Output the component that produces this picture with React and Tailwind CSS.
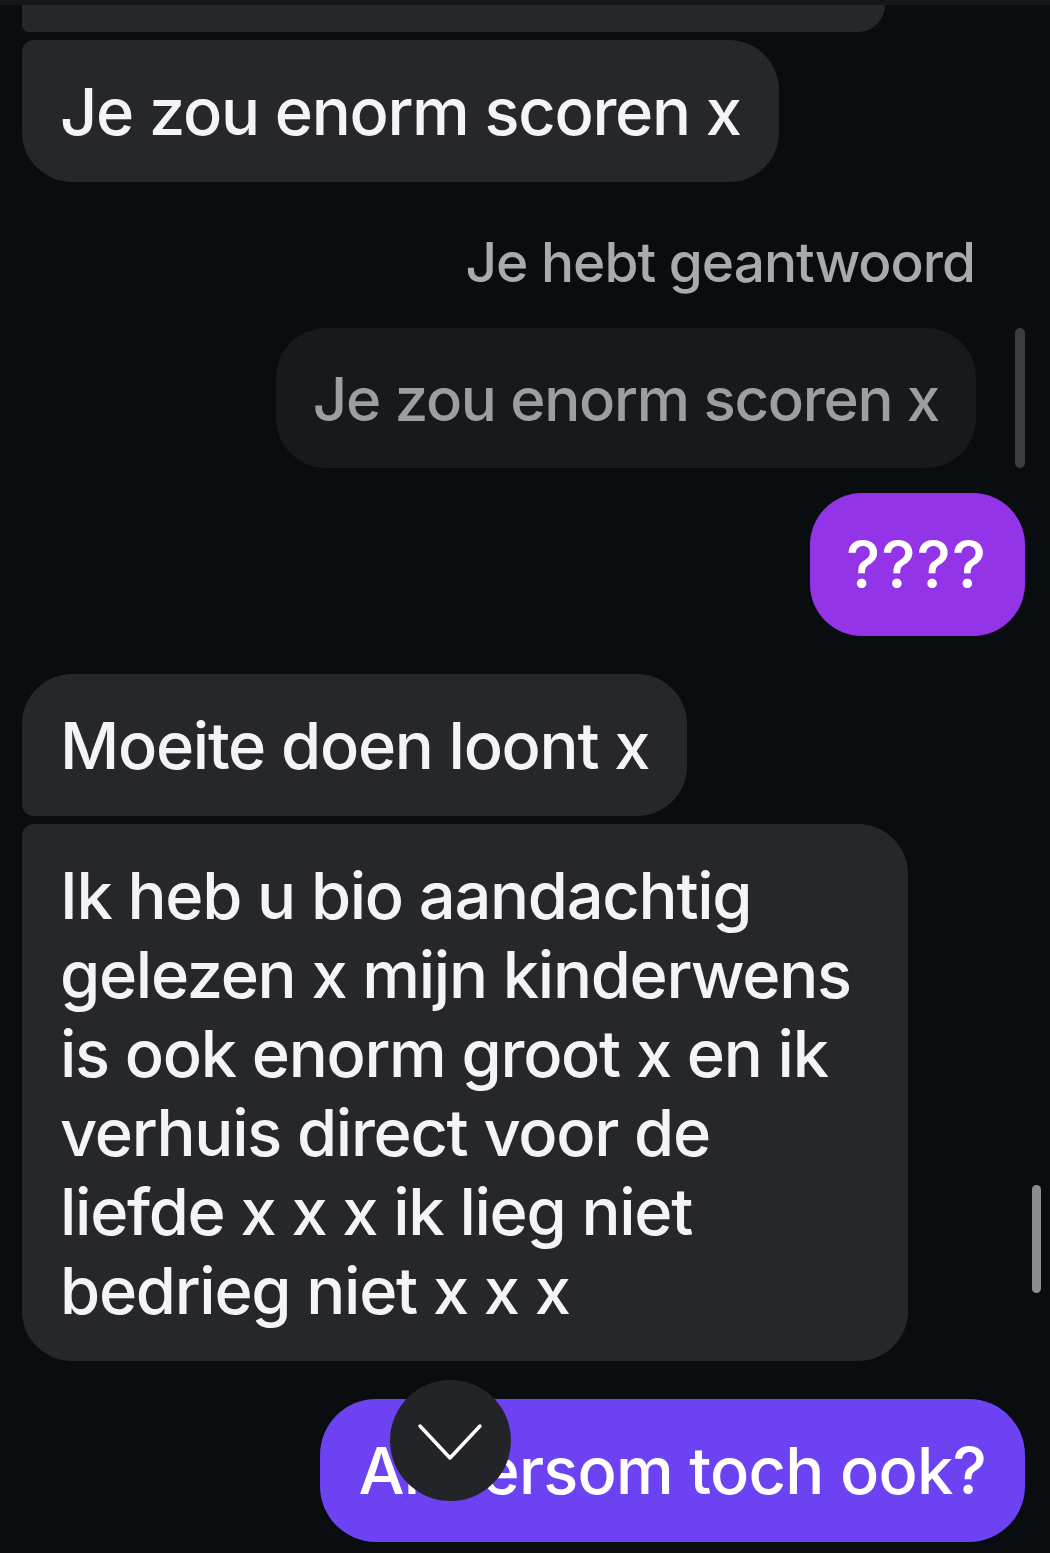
import React from "react";

const font = { fontFamily: "Inter, 'Noto Sans', sans-serif" };

function Received({ children, corners }) {
  return (
    <div className="flex justify-start pl-[22px]">
      <div
        className={`bg-[#25272b] text-[#f4f4f6] px-[38px] pt-8 pb-[31px] text-[65px] font-medium leading-[79px] tracking-[-1.3px] ${corners}`}
      >
        {children}
      </div>
    </div>
  );
}

export default function App() {
  return (
    <div
      className="relative w-[1050px] h-[1553px] bg-[#0a0d0f] overflow-hidden"
      style={font}
    >
      {/* top strip */}
      <div className="h-[5px] bg-[#15181a]" />

      {/* cut-off previous bubble */}
      <div className="pl-[22px]">
        <div className="w-[863px] h-[27px] bg-[#25272b] rounded-bl-[12px] rounded-br-[48px]" />
      </div>

      <div className="mt-2">
        <Received corners="rounded-tl-[12px] rounded-tr-[50px] rounded-br-[50px] rounded-bl-[50px]">
          Je zou enorm scoren x
        </Received>
      </div>

      {/* reply */}
      <div className="mt-[50px] flex justify-end pr-[75px]">
        <div className="text-[55px] font-medium leading-[60px] tracking-[-1px] text-[#a9aaae]">
          Je hebt geantwoord
        </div>
      </div>
      <div className="mt-[36px] flex justify-end items-stretch pr-[25px] gap-[39px]">
        <div className="bg-[#17191c] text-[#9d9ea2] rounded-[50px] px-[37px] pt-[33px] pb-[31px] text-[60px] font-medium leading-[76px] tracking-[-1.3px]">
          Je zou enorm scoren x
        </div>
        <div className="w-[10px] rounded-full bg-[#3a3d41]" />
      </div>

      {/* sent ???? */}
      <div className="mt-[25px] flex justify-end pr-[25px]">
        <div className="bg-[#9434e8] text-white rounded-[52px] pl-[36px] pr-[38px] pt-8 pb-[32px] text-[65px] font-medium leading-[79px] tracking-[1px]">
          ????
        </div>
      </div>

      <div className="mt-[38px]">
        <Received corners="rounded-tl-[50px] rounded-tr-[50px] rounded-br-[50px] rounded-bl-[12px]">
          Moeite doen loont x
        </Received>
      </div>

      <div className="mt-2">
        <Received corners="rounded-tl-[12px] rounded-tr-[50px] rounded-br-[50px] rounded-bl-[50px] w-[886px]">
          Ik heb u bio aandachtig
          <br />
          gelezen x mijn kinderwens
          <br />
          is ook enorm groot x en ik
          <br />
          verhuis direct voor de
          <br />
          liefde x x x ik lieg niet
          <br />
          bedrieg niet x x x
        </Received>
      </div>

      {/* last sent */}
      <div className="relative mt-[38px] flex justify-end pr-[25px]">
        <div className="bg-[#6c42f3] text-white rounded-[56px] px-[39px] pt-8 pb-[32px] text-[65px] font-medium leading-[79px] tracking-[-0.8px]">
          Andersom toch ook?
        </div>
        <div className="absolute left-[390px] -top-[19px] w-[121px] h-[121px] rounded-full bg-[#222428] flex items-center justify-center">
          <svg width="121" height="121" viewBox="0 0 121 121" fill="none">
            <polyline
              points="30,46 60,78 90,46"
              stroke="#ffffff"
              strokeWidth="3.5"
              strokeLinecap="round"
              strokeLinejoin="round"
            />
          </svg>
        </div>
      </div>

      {/* scrollbar */}
      <div className="absolute left-[1032px] top-[1185px] w-[9px] h-[108px] rounded-full bg-[#8a8d91]" />
    </div>
  );
}
